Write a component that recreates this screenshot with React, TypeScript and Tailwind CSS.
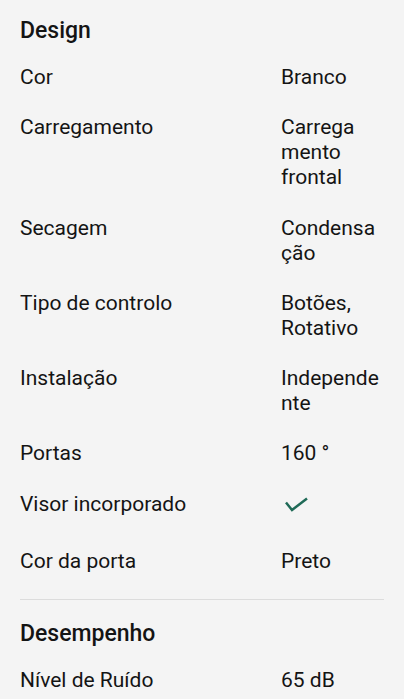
type Row = [string, string[] | null];

const design: Row[] = [
  ["Cor", ["Branco"]],
  ["Carregamento", ["Carrega", "mento", "frontal"]],
  ["Secagem", ["Condensa", "ção"]],
  ["Tipo de controlo", ["Botões,", "Rotativo"]],
  ["Instalação", ["Independe", "nte"]],
  ["Portas", ["160 °"]],
  ["Visor incorporado", null],
  ["Cor da porta", ["Preto"]],
];

const perf: Row[] = [["Nível de Ruído", ["65 dB"]]];

function Check() {
  return (
    <svg width="30" height="24" viewBox="0 0 30 24" className="mb-[8px]">
      <path d="M5 10.5L11 18L26 6.5" fill="none" stroke="#1f6a57" strokeWidth="2.5" />
    </svg>
  );
}

function Rows({ rows }: { rows: Row[] }) {
  return (
    <div className="flex flex-col gap-[25.3px]">
      {rows.map(([label, value]) => (
        <div key={label} className="flex items-start">
          <div className="flex-1">{label}</div>
          <div className="w-[103px]">
            {value === null ? <Check /> : value.map((l) => <div key={l}>{l}</div>)}
          </div>
        </div>
      ))}
    </div>
  );
}

export default function App() {
  return (
    <div
      className="min-h-screen bg-[#f4f4f4] text-[#141414] px-5 text-[21px] leading-[25px]"
      style={{ fontFamily: "Roboto, sans-serif" }}
    >
      <section className="pt-[17px] pb-[25px] border-b border-[#dcdcdc]">
        <h2 className="text-[23px] font-medium leading-[28px] mb-[20px]">Design</h2>
        <Rows rows={design} />
      </section>
      <section className="pt-[20px]">
        <h2 className="text-[23px] font-medium leading-[28px] mb-[20px]">Desempenho</h2>
        <Rows rows={perf} />
      </section>
    </div>
  );
}
